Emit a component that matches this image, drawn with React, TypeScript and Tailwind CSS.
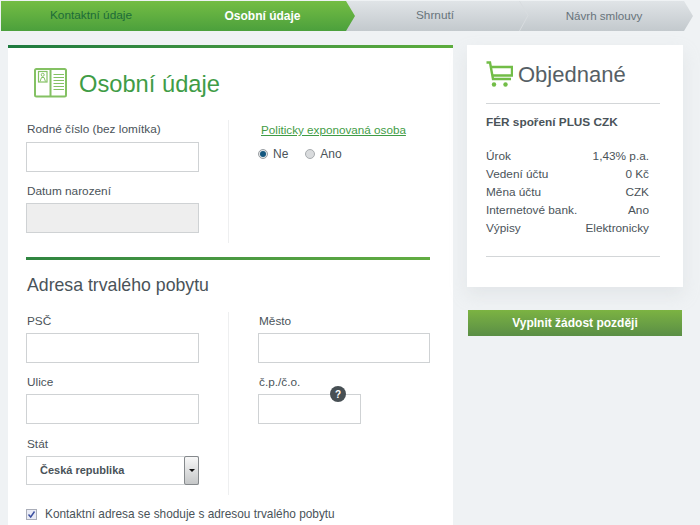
import React from 'react';

const font = { fontFamily: '"Liberation Sans", Arial, sans-serif' };

const Chevron = ({ color }: { color: string }) => (
  <svg className="absolute right-[-9px] top-0" width="10" height="30" viewBox="0 0 10 30" fill="none">
    <path d="M0.5 0 L9 14.5 L0.5 30" stroke={color} strokeWidth="1" />
  </svg>
);

const Stepper = () => (
  <div className="flex h-[30px] mt-px ml-px w-[692px] relative bg-gradient-to-b from-[#e0e4e7] to-[#c3c9cd] [clip-path:polygon(0_0,683px_0,692px_15px,683px_30px,0_30px)]">
    <div className="relative w-[174px] h-full bg-gradient-to-b from-[#74bd44] to-[#4ba03c] flex items-center justify-center pr-[8px] text-[11.8px] text-[#1c6b38]">
      <span className="ml-[14px]">Kontaktní údaje</span>
    </div>
    <div className="w-[181px] h-full -ml-px bg-gradient-to-b from-[#74bd44] to-[#4ba03c] [clip-path:polygon(0_0,172px_0,181px_15px,172px_30px,0_30px)] flex items-center justify-center text-xs font-bold text-white pr-[4px] relative z-10">
      Osobní údaje
    </div>
    <div className="relative w-[173px] h-full -ml-[8px] flex items-center justify-center text-[11.8px] text-[#68747b]">
      <span className="ml-[3px]">Shrnutí</span>
      <Chevron color="#d8dcdf" />
    </div>
    <div className="flex-1 h-full flex items-center justify-center text-[11.6px] text-[#68747b] pr-[5px]">
      Návrh smlouvy
    </div>
    <svg className="absolute left-[174px] top-0" width="10" height="30" viewBox="0 0 10 30" fill="none">
      <path d="M0 0 L8.5 15 L0 30" stroke="#48993c" strokeWidth="1" />
    </svg>
  </div>
);

const Field = ({ label, className = '', w = 'w-[173px]', bg = 'bg-white', gap = 'mt-[4px]' }: { label: string; className?: string; w?: string; bg?: string; gap?: string }) => (
  <div className={className}>
    <div className="h-[15px] pl-px text-[11.8px] leading-[15px] text-[#4a5359]">{label}</div>
    <div className={`${w} h-[30px] ${gap} border border-[#cfd2d4] ${bg}`} />
  </div>
);

const IdIcon = () => (
  <svg width="33" height="30" viewBox="0 0 33 30" fill="none" stroke="#84c163">
    <rect x="1" y="1" width="31" height="27.5" rx="1.5" strokeWidth="2" />
    <path d="M16.5 1 V28.5" strokeWidth="2" />
    <rect x="4.5" y="3.5" width="8.5" height="10.5" strokeWidth="1.2" />
    <circle cx="8.7" cy="6.8" r="1.5" strokeWidth="1" />
    <path d="M6 13.5 L7.5 9.5 H10 L11.5 13.5" strokeWidth="1" />
    <path d="M19.5 6.5 H30 M19.5 9.5 H30 M19.5 12.5 H30 M19.5 15.5 H30 M19.5 18.5 H30 M19.5 21.5 H30" strokeWidth="1.1" />
  </svg>
);

const CartIcon = () => (
  <svg width="27" height="27" viewBox="0 0 27 27" fill="none" stroke="#72bd47">
    <path d="M0.5 1.5 H4 L7 18 H25" strokeWidth="2.4" />
    <path d="M5 6 H26 V14.5 H6.5" strokeWidth="2.4" />
    <circle cx="8" cy="23.5" r="2.2" fill="#72bd47" stroke="none" />
    <circle cx="19.5" cy="23.5" r="2.2" fill="#72bd47" stroke="none" />
  </svg>
);

const rows = [
  ['Úrok', '1,43% p.a.'],
  ['Vedení účtu', '0 Kč'],
  ['Měna účtu', 'CZK'],
  ['Internetové bank.', 'Ano'],
  ['Výpisy', 'Elektronicky'],
];

export default function App() {
  return (
    <div style={font} className="w-[700px] h-[525px] overflow-hidden bg-[#eff2f4]">
      <Stepper />
      <div className="flex items-start mt-[14px] ml-[8px] gap-[14px]">
        <div className="w-[445px] h-[480px] bg-white shrink-0">
          <div className="h-[3px] bg-gradient-to-r from-[#1d7a3f] to-[#5cac3d]" />
          <div className="flex items-center h-[30px] mt-[20px] ml-[26px] gap-[12px]">
            <IdIcon />
            <h1 className="text-[23.7px] leading-[30px] mt-[2px] text-[#3f9c46]">Osobní údaje</h1>
          </div>
          <div className="flex mt-[22px] ml-[18px]">
            <div className="w-[203px] h-[123px] border-r border-[#eeeff0] pt-[2px]">
              <Field label="Rodné číslo (bez lomítka)" gap="mt-[5px]" />
              <Field label="Datum narození" className="mt-[12px]" bg="bg-[#eeeeee]" />
            </div>
            <div className="pl-[32px] pt-[2px]">
              <a className="block h-[15px] text-[11.7px] leading-[15px] text-[#3f9c46] underline">Politicky exponovaná osoba</a>
              <div className="flex items-center mt-[9px] -ml-[3px] text-xs text-[#4a5359]">
                <span className="w-[10px] h-[10px] rounded-full border border-[#9a9fa3] bg-[#e4e6e8] flex items-center justify-center">
                  <span className="w-[6px] h-[6px] rounded-full bg-[#14577f]" />
                </span>
                <span className="ml-[5px]">Ne</span>
                <span className="w-[10px] h-[10px] rounded-full border border-[#a8acaf] bg-[#d9dbdd] ml-[17px]" />
                <span className="ml-[5px]">Ano</span>
              </div>
            </div>
          </div>
          <div className="h-[3px] w-[404px] ml-[18px] mt-[14px] bg-gradient-to-r from-[#2f8540] to-[#62ad42]" />
          <h2 className="ml-[19px] mt-[15px] text-[17.7px] leading-[20px] text-[#4a5359]">Adresa trvalého pobytu</h2>
          <div className="flex ml-[18px] mt-[17px]">
            <div className="w-[203px] h-[183px] border-r border-[#eeeff0] pt-[2px]">
              <Field label="PSČ" />
              <Field label="Ulice" className="mt-[12px]" />
              <div className="mt-[13px]">
                <div className="h-[15px] pl-px text-[11.8px] leading-[15px] text-[#4a5359]">Stát</div>
                <div className="w-[173px] h-[29px] mt-[4px] border border-[#cfd2d4] bg-white flex items-center">
                  <span className="flex-1 pl-[13px] text-[11px] font-bold text-[#4a5359]">Česká republika</span>
                  <span className="w-[15px] h-[29px] -mr-px border border-[#85898c] rounded-[2px] bg-gradient-to-b from-[#f8f8f8] to-[#c5c7c8] flex items-center justify-center">
                    <span className="w-0 h-0 border-x-[3px] border-x-transparent border-t-[3px] border-t-[#111]" />
                  </span>
                </div>
              </div>
            </div>
            <div className="pl-[29px] pt-[2px]">
              <Field label="Město" w="w-[172px]" />
              <div className="mt-[12px] relative">
                <Field label="č.p./č.o." w="w-[103px]" />
                <span className="absolute left-[72px] top-[11px] w-[16px] h-[16px] rounded-full bg-[#474f54] text-white text-[10px] font-bold flex items-center justify-center">?</span>
              </div>
            </div>
          </div>
          <div className="flex items-center ml-[18px] mt-[11px] text-[11.85px] text-[#4a5359]">
            <span className="w-[11px] h-[11px] border border-[#a9adb8] bg-[#e9ebf5] flex items-center justify-center">
              <svg width="9" height="9" viewBox="0 0 9 9" fill="none">
                <path d="M1.5 4.5 L3.7 7 L7.5 1.5" stroke="#3b4fa0" strokeWidth="1.4" />
              </svg>
            </span>
            <span className="ml-[8px]">Kontaktní adresa se shoduje s adresou trvalého pobytu</span>
          </div>
        </div>

        <div className="w-[216px] shrink-0">
          <div className="h-[242px] bg-white pl-[19px] pr-[23px] pt-[16px] shadow-[0_8px_16px_rgba(190,196,200,0.25)]">
            <div className="flex items-center h-[27px] gap-[5px]">
              <CartIcon />
              <span className="text-[22px] leading-[27px] text-[#565f66]">Objednané</span>
            </div>
            <div className="border-t border-[#d3d6d8] mt-[15px]" />
            <div className="mt-[11px] text-[11.8px] font-bold leading-[15px] text-[#4a5359]">FÉR spoření PLUS CZK</div>
            <div className="mt-[17px] pr-[11px]">
              {rows.map(([k, v]) => (
                <div key={k} className="flex justify-between h-[18px] text-[11.8px] leading-[18px] text-[#4a5359]">
                  <span>{k}</span>
                  <span>{v}</span>
                </div>
              ))}
            </div>
            <div className="border-t border-[#d3d6d8] mt-[19px]" />
          </div>
          <div className="ml-px w-[214px] h-[26px] mt-[23px] bg-gradient-to-b from-[#7cb342] to-[#5a8e45] flex items-center justify-center text-xs font-bold text-white">
            Vyplnit žádost později
          </div>
        </div>
      </div>
    </div>
  );
}
